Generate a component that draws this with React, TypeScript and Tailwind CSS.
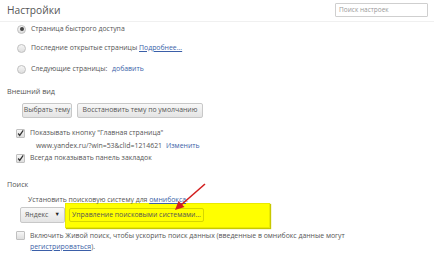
import React from "react";

const Radio = ({ checked }: { checked?: boolean }) => (
  <span className="w-[9px] h-[9px] rounded-full border border-[#c0c0c0] bg-gradient-to-b from-[#f6f6f6] to-[#dedede] flex items-center justify-center shrink-0">
    {checked && <span className="w-[4px] h-[4px] rounded-full bg-[#444]" />}
  </span>
);

const Check = ({ checked }: { checked?: boolean }) => (
  <span className="w-[9px] h-[9px] rounded-[1px] border border-[#c0c0c0] bg-gradient-to-b from-[#f6f6f6] to-[#dedede] flex items-center justify-center shrink-0">
    {checked && (
      <svg width="9" height="9" viewBox="0 0 9 9">
        <path d="M1.5 4.5 L3.5 7 L8 0.5" stroke="#333" strokeWidth="1.6" fill="none" />
      </svg>
    )}
  </span>
);

export default function App() {
  return (
    <div
      className="w-[434px] h-[259px] bg-white relative overflow-hidden text-[6.9px] text-[#555] leading-none"
      style={{ fontFamily: '"Open Sans", "Noto Sans", sans-serif' }}
    >
      <div className="h-[22px] flex items-start justify-between border-b border-[#f0f0f0] pl-[7px] pr-[6px]">
        <span className="text-[10.2px] text-[#555] mt-[5px]">Настройки</span>
        <span className="w-[93px] h-[14px] mt-[3px] border border-[#cfcfcf] rounded-[1px] flex items-center pl-[3px] text-[#999] text-[6.5px]">
          Поиск настроек
        </span>
      </div>

      <div className="pl-[17px] flex flex-col">
        <div className="h-[12px] mt-[1px] flex items-center gap-[5px]">
          <Radio checked />
          <span>Страница быстрого доступа</span>
        </div>
        <div className="h-[12px] mt-[7px] flex items-center gap-[5px]">
          <Radio />
          <span>
            Последние открытые страницы{" "}
            <span className="text-[#3b5fa8] underline">Подробнее...</span>
          </span>
        </div>
        <div className="h-[12px] mt-[9px] flex items-center gap-[5px]">
          <Radio />
          <span>
            Следующие страницы: <span className="text-[#3b5fa8] ml-[3px]">добавить</span>
          </span>
        </div>
      </div>

      <div className="pl-[7px] mt-[11px] h-[12px] flex items-center text-[7.2px]">Внешний вид</div>
      <div className="pl-[22px] mt-[5px] h-[15px] flex gap-[5px]">
        <span className="w-[50px] h-[15px] flex items-center justify-center border border-[#c8c8c8] rounded-[2px] bg-gradient-to-b from-[#f8f8f8] to-[#e4e4e4]">
          Выбрать тему
        </span>
        <span className="w-[126px] h-[15px] flex items-center justify-center border border-[#c8c8c8] rounded-[2px] bg-gradient-to-b from-[#f8f8f8] to-[#e4e4e4]">
          Восстановить тему по умолчанию
        </span>
      </div>
      <div className="pl-[16px] mt-[9px] h-[12px] flex items-center gap-[5px]">
        <Check checked />
        <span>Показывать кнопку "Главная страница"</span>
      </div>
      <div className="pl-[36px] mt-[1px] h-[12px] flex items-center gap-[4px]">
        <span>www.yandex.ru/?win=53&amp;clid=1214621</span>
        <span className="text-[#3b5fa8]">Изменить</span>
      </div>
      <div className="pl-[16px] h-[12px] flex items-center gap-[5px]">
        <Check checked />
        <span>Всегда показывать панель закладок</span>
      </div>

      <div className="pl-[7px] mt-[15px] h-[12px] flex items-center text-[7.2px]">Поиск</div>
      <div className="pl-[28px] mt-[3px] h-[12px] flex items-center relative z-10">
        <span>
          Установить поисковую систему для <span className="text-[#3b5fa8] underline">омнибокса</span>.
        </span>
      </div>
      <div className="pl-[20px] mt-[1px] h-[16px] flex items-center">
        <span className="w-[45px] h-[16px] pl-[4px] pr-[4px] flex items-center justify-between border border-[#c8c8c8] rounded-[2px] bg-gradient-to-b from-[#f8f8f8] to-[#e4e4e4]">
          <span>Яндекс</span>
          <span className="text-[#222] text-[5.5px]">▼</span>
        </span>
        <div className="bg-[#ffff00] h-[25px] w-[205px] shrink-0 flex items-center pl-[3px] shadow-[1px_1px_1px_#c8c800] border border-[#eaea00]">
          <span className="w-[135px] h-[14px] flex items-center justify-center border border-[#d6d600] rounded-[2px]">
            Управление поисковыми системами...
          </span>
        </div>
      </div>
      <div className="pl-[16px] mt-[7px] flex items-start gap-[5px]">
        <span className="mt-[1px]">
          <Check />
        </span>
        <span className="leading-[11px] -mt-[0.5px]">
          Включить Живой поиск, чтобы ускорить поиск данных (введенные в омнибокс данные могут
          <br />
          <span className="text-[#3b5fa8] underline">регистрироваться</span>).
        </span>
      </div>

      <svg className="absolute left-[168px] top-[181px] z-20" width="42" height="34" viewBox="0 0 42 34">
        <path d="M37 3 L13 24" stroke="#d21e1e" strokeWidth="1.6" fill="none" />
        <path d="M7 29 L10.5 20 L16.5 26 Z" fill="#d21e1e" />
      </svg>
    </div>
  );
}
